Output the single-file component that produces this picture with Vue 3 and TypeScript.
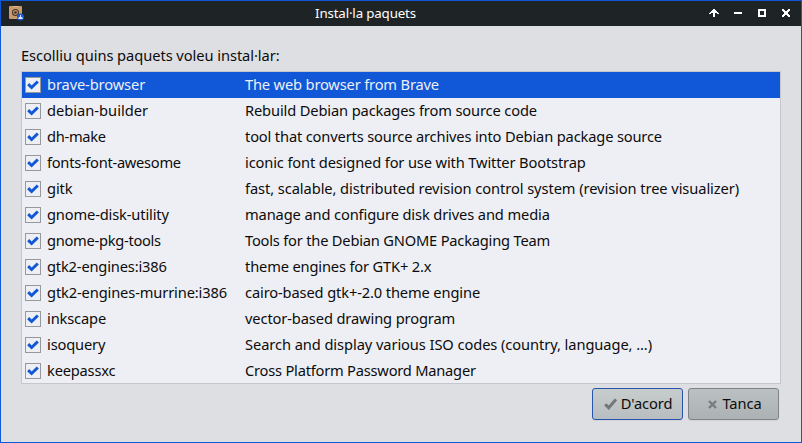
<script setup lang="ts">
import { ref } from 'vue'

interface Pkg {
  name: string
  description: string
  checked: boolean
  // Letter spacing in px for each column
  tracking: [number, number]
}

const pkg = (name: string, description: string, a: number, b: number): Pkg => ({
  name,
  description,
  checked: true,
  tracking: [a, b],
})

const packages = ref<Pkg[]>([
  pkg('brave-browser', 'The web browser from Brave', -0.12, -0.17),
  pkg('debian-builder', 'Rebuild Debian packages from source code', 0, -0.135),
  pkg('dh-make', 'tool that converts source archives into Debian package source', -0.3, -0.155),
  pkg('fonts-font-awesome', 'iconic font designed for use with Twitter Bootstrap', -0.28, -0.14),
  pkg('gitk', 'fast, scalable, distributed revision control system (revision tree visualizer)', -0.1, -0.08),
  pkg('gnome-disk-utility', 'manage and configure disk drives and media', -0.15, -0.125),
  pkg('gnome-pkg-tools', 'Tools for the Debian GNOME Packaging Team', -0.28, -0.2),
  pkg('gtk2-engines:i386', 'theme engines for GTK+ 2.x', -0.17, -0.16),
  pkg('gtk2-engines-murrine:i386', 'cairo-based gtk+-2.0 theme engine', -0.13, -0.13),
  pkg('inkscape', 'vector-based drawing program', -0.15, -0.12),
  pkg('isoquery', 'Search and display various ISO codes (country, language, ...)', -0.15, -0.08),
  pkg('keepassxc', 'Cross Platform Password Manager', -0.2, -0.22),
])
const selected = ref(0)
</script>

<template>
  <div class="window">
    <header class="titlebar">
      <svg class="app-icon" width="16" height="16" viewBox="0 0 16 16">
        <rect x="0" y="0" width="13" height="13" rx="1" fill="#c99a6b" />
        <rect x="4" y="0" width="5" height="1" fill="#dfb98f" />
        <circle cx="6.5" cy="6.5" r="3" fill="none" stroke="#4a3628" stroke-width="1.1" />
        <circle cx="6.5" cy="6.5" r="1.3" fill="#3a2d25" />
        <circle cx="11.5" cy="11" r="3.5" fill="#1857d6" />
        <path d="M11 9h1v2h1.2l.6 2h-4.6l.6-2H11z" fill="#dce8ff" />
      </svg>
      <h1 class="title">Instal·la paquets</h1>
      <div class="controls">
        <svg width="12" height="10" viewBox="0 0 12 10" shape-rendering="crispEdges"><path d="M5 1h2v1h1v1h1v1h1v1h1v1H9V5H7v4H5V5H3v1H1V5h1V4h1V3h1V2h1z" fill="#fff" /></svg>
        <svg width="12" height="10" viewBox="0 0 12 10"><rect x="2" y="4" width="8" height="2" fill="#fff" /></svg>
        <svg width="12" height="10" viewBox="0 0 12 10"><rect x="3" y="2" width="6" height="6" fill="none" stroke="#fff" stroke-width="2" /></svg>
        <svg width="12" height="10" viewBox="0 0 12 10" shape-rendering="crispEdges"><path d="M2 1h2v1h1v1h2V2h1V1h2v2H9v1H8v2h1v1h1v2H8V8H7V7H5v1H4v1H2V7h1V6h1V4H3V3H2z" fill="#fff" /></svg>
      </div>
    </header>
    <main class="body">
      <p class="prompt">Escolliu quins paquets voleu instal·lar:</p>
      <ul class="list">
        <li
          v-for="(p, i) in packages"
          :key="p.name"
          class="row"
          :class="{ selected: i === selected }"
          @click="selected = i"
        >
          <span class="check" @click.stop="p.checked = !p.checked">
            <svg v-if="p.checked" width="14" height="14" viewBox="0 0 14 14">
              <path d="M2.2 6.2 5.6 9.5 11.8 3.5" fill="none" stroke="#1058d8" stroke-width="3" />
            </svg>
          </span>
          <span class="cell" :style="{ letterSpacing: p.tracking[0] + 'px' }">{{ p.name }}</span>
          <span class="cell" :style="{ letterSpacing: p.tracking[1] + 'px' }">{{ p.description }}</span>
        </li>
      </ul>
      <footer class="actions">
        <button class="btn default" type="button">
          <svg width="13" height="12" viewBox="0 0 13 12"><path d="M1.2 6.2 4.7 9.8 12 1.4" fill="none" stroke="#727678" stroke-width="3" /></svg>
          <span>D'acord</span>
        </button>
        <button class="btn cancel" type="button">
          <svg width="9" height="9" viewBox="0 0 9 9"><path d="M1 1 8 8M8 1 1 8" fill="none" stroke="#777c7e" stroke-width="2.4" /></svg>
          <span>Tanca</span>
        </button>
      </footer>
    </main>
  </div>
</template>

<style scoped>
.window {
  box-sizing: border-box;
  width: 802px;
  height: 443px;
  border: 1px solid #1058d8;
  background: #dedfe3;
  color: #0c0c0c;
  font: 14.667px/26px "Noto Sans", sans-serif;
  overflow: hidden;
}
.titlebar {
  display: grid;
  grid-template-columns: 120px 1fr 120px;
  height: 25px;
  background: #1e2426;
  color: #fff;
}
.app-icon {
  margin: 5px 0 0 8px;
}
.title {
  margin: 0;
  padding-right: 71px;
  font-size: 13.333px;
  font-weight: 400;
  line-height: 25px;
  letter-spacing: -0.16px;
  text-align: center;
  white-space: nowrap;
}
.controls {
  display: flex;
  justify-content: flex-end;
  gap: 12px;
  padding: 7px 9px 0 0;
}
.body {
  padding: 16px 20px 0;
}
.prompt {
  margin: 0;
  height: 29px;
  letter-spacing: -0.06px;
}
.list {
  box-sizing: border-box;
  width: 760px;
  height: 313px;
  margin: 0;
  padding: 0;
  list-style: none;
  overflow: hidden;
  border: 1px solid #c6c7cc;
  background: #eeeff4;
}
.row {
  display: grid;
  grid-template-columns: 16px 198px 1fr;
  align-items: start;
  height: 26px;
  padding-left: 3px;
  line-height: 24px;
  white-space: nowrap;
}
.row.selected {
  background: #1058d8;
  color: #eeeff4;
}
.check {
  box-sizing: border-box;
  width: 16px;
  height: 16px;
  margin-top: 5px;
  border: 1px solid #96989c;
  background: #eeeff4;
}
.check svg,
.btn svg {
  display: block;
}
.cell {
  padding-left: 6px;
}
.actions {
  display: flex;
  justify-content: flex-end;
  gap: 5px;
  padding: 4px 2px 0 0;
}
.btn {
  box-sizing: border-box;
  display: flex;
  align-items: center;
  justify-content: center;
  width: 91px;
  height: 32px;
  padding: 0;
  border: 1px solid #7e8386;
  border-radius: 3px;
  background: linear-gradient(#bbc1c3, #acb2b4);
  box-shadow: 0 1px 1px rgba(0, 0, 0, 0.06);
  color: #0c0c0c;
  font: inherit;
  line-height: 24px;
  letter-spacing: -0.1px;
  gap: 4px;
}
.btn span {
  padding-bottom: 2px;
}
.btn.default {
  padding-left: 1px;
  border-color: #2654ae;
  background: linear-gradient(#c7cccd, #b8bdbf);
}
.btn.cancel {
  padding-left: 3px;
  gap: 5px;
}
</style>
